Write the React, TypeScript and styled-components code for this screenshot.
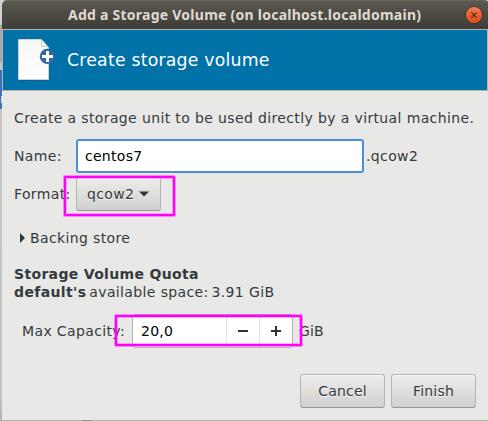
import React from "react";
import styled, { createGlobalStyle } from "styled-components";

const GlobalStyle = createGlobalStyle`
  * { box-sizing: border-box; }
  html, body { margin: 0; padding: 0; overflow: hidden; }
  body { font-family: "DejaVu Sans", sans-serif; font-size: 14px; color: #343a3c; }
  button, input { font: inherit; letter-spacing: 0.28px; color: inherit; }
`;

const Desktop = styled.div`
  width: 488px;
  height: 421px;
  padding: 0 0 1px 2px;
  background:
    linear-gradient(#c9d8ec, #c9d8ec) 1px 96px / 1px 7px no-repeat,
    linear-gradient(#3f73b8, #3f73b8) 0 70px / 2px 39px no-repeat,
    linear-gradient(#8f8f8d, #8f8f8d) 82px 420px / 9px 1px no-repeat,
    linear-gradient(#d4d4d2, #cfcfcd 24px, #a9a9a7 25px, #a9a9a7 62px, #c6c6c4 63px, #c2c2c0 400px, #b0b0ae);
`;

const Dialog = styled.section`
  display: flex;
  flex-direction: column;
  height: 420px;
  background: #e8e8e7;
  border-radius: 5px 3px 0 0;
  overflow: hidden;
`;

const TitleBar = styled.header`
  display: grid;
  grid-template-columns: 1fr 16px;
  align-items: center;
  flex: none;
  height: 29px;
  padding: 0 6px 1px 66px;
  background: linear-gradient(#5b5850, #3e3c38);
  border-top: 1px solid #69665e;
`;

const Title = styled.h1`
  margin: 0;
  font: bold 14px/20px "Noto Sans", sans-serif;
  letter-spacing: 0.25px;
  color: #dfdbd2;
  white-space: nowrap;
`;

const CloseButton = styled.button`
  display: grid;
  place-items: center;
  width: 16px;
  height: 16px;
  padding: 0;
  border: 0;
  border-radius: 50%;
  background: linear-gradient(#f37c5c, #e95420 70%);
  box-shadow: 0 0 0 1px #383631;
`;

const Banner = styled.div`
  display: flex;
  align-items: center;
  gap: 9px;
  flex: none;
  height: 62px;
  padding: 0 13px;
  background: #0072a8;
  border: 1px solid #b3b3b0;
`;

const BannerTitle = styled.h2`
  margin: 0;
  font-size: 17.3px;
  font-weight: normal;
  line-height: 22px;
  letter-spacing: 0.22px;
  color: #fff;
  white-space: nowrap;
`;

const Content = styled.main`
  display: flex;
  flex-direction: column;
  flex: 1;
  padding: 18px 12px 0;
`;

const Text = styled.span<{ $spacing?: number }>`
  line-height: 18px;
  white-space: nowrap;
  letter-spacing: ${({ $spacing = 0.37 }) => $spacing}px;
`;

const TightSpan = styled.span`
  margin-left: -2px;
`;

const Form = styled.div`
  display: grid;
  grid-template-columns: 62px 1fr;
  grid-auto-rows: 34px;
  row-gap: 4px;
  align-items: center;
  margin-top: 12px;
`;

const Field = styled.div`
  display: flex;
  align-items: center;
  gap: 2px;
`;

const Entry = styled.input`
  width: 288px;
  height: 34px;
  padding: 0 7px;
  border: 2px solid #4a90d9;
  border-radius: 3px;
  outline: 0;
  background: #fff;
  color: #000;
`;

const Button = styled.button<{ $menu?: boolean }>`
  display: flex;
  align-items: center;
  justify-content: ${({ $menu }) => ($menu ? "flex-start" : "center")};
  gap: 5px;
  width: 85px;
  height: 34px;
  padding: ${({ $menu }) => ($menu ? "0 0 0 10px" : "0")};
  border: 1px solid #b4b4b2;
  border-bottom-color: #979795;
  border-radius: 3px;
  background: linear-gradient(#ececeb, #e0e0df 45%, #d0d0ce);
  box-shadow: inset 0 1px #f8f8f7;
  text-shadow: 0 1px rgba(255, 255, 255, 0.75);
`;

const Expander = styled.div`
  display: flex;
  align-items: center;
  gap: 5px;
  margin-top: 18px;
  padding-left: 6px;
`;

const Quota = styled.div`
  display: flex;
  flex-direction: column;
  margin-top: 18px;
`;

const Capacity = styled.div`
  display: flex;
  align-items: center;
  height: 34px;
  margin-top: 13px;
  padding-left: 8px;
`;

const CapacityLabel = styled.div`
  display: flex;
  width: 110px;
`;

const Spinner = styled.div`
  display: grid;
  grid-template-columns: 93px 33px 33px;
  flex: none;
  width: 161px;
  height: 34px;
  margin-right: 6px;
  border: 1px solid #b4b4b2;
  border-radius: 3px;
  background: #fff;
`;

const SpinValue = styled.input`
  min-width: 0;
  padding: 0 0 0 8px;
  border: 0;
  outline: 0;
  background: transparent;
  color: #000;
`;

const SpinButton = styled.button`
  display: grid;
  place-items: center;
  padding: 0;
  border: 0;
  border-left: 1px solid #e1e1e0;
  background: transparent;
`;

const Actions = styled.footer`
  display: flex;
  justify-content: flex-end;
  gap: 6px;
  margin-top: 26px;
`;

const Highlight = styled.div<{ $x: number; $y: number; $w: number; $h: number }>`
  position: absolute;
  left: ${({ $x }) => $x}px;
  top: ${({ $y }) => $y}px;
  width: ${({ $w }) => $w}px;
  height: ${({ $h }) => $h}px;
  border: 2px solid #ff00ff;
  border-radius: 1px;
  box-shadow: 0 0 0 1px rgba(255, 0, 255, 0.4), inset 0 0 0 1px rgba(255, 0, 255, 0.3);
  pointer-events: none;
`;

function DocumentIcon() {
  return (
    <svg width="42" height="46" viewBox="0 0 42 46">
      <defs>
        <linearGradient id="paper" x2="0" y2="1">
          <stop stopColor="#f6f6f5" />
          <stop offset="1" stopColor="#fff" />
        </linearGradient>
      </defs>
      <path d="M2.5 43.5h30" stroke="#155878" strokeOpacity=".6" />
      <path d="M2.5 2.5h23l7 8v32h-30z" fill="url(#paper)" stroke="#d0d0ce" />
      <path d="M25.5 3v6.5H31" fill="#fff" stroke="#c9c9c7" />
      <circle cx="31.4" cy="19.4" r="7.6" fill="#3465a4" />
      <path d="M31.5 14v11M26 19.5h11" stroke="#fff" strokeWidth="3" />
    </svg>
  );
}

export default function App() {
  return (
    <>
      <GlobalStyle />
      <Desktop>
        <Dialog>
          <TitleBar>
            <Title>Add a Storage Volume (on localhost.localdomain)</Title>
            <CloseButton aria-label="Close">
              <svg width="8" height="8" viewBox="0 0 8 8">
                <path d="m1.3 1.3 5.4 5.4m0-5.4L1.3 6.7" stroke="#4c2a1d" strokeWidth="1.2" />
              </svg>
            </CloseButton>
          </TitleBar>
          <Banner>
            <DocumentIcon />
            <BannerTitle>Create storage volume</BannerTitle>
          </Banner>
          <Content>
            <Text>Create a storage unit to be used directly by a virtual machine.</Text>
            <Form>
              <Text>Name:</Text>
              <Field>
                <Entry defaultValue="centos7" />
                <Text>.qcow2</Text>
              </Field>
              <Text>Format:</Text>
              <Field>
                <Button $menu>
                  <Text>qcow2</Text>
                  <svg width="10" height="6" viewBox="0 0 10 6">
                    <path d="M0 .5h10L5 5.5z" fill="#2e3436" />
                  </svg>
                </Button>
              </Field>
            </Form>
            <Expander>
              <svg width="5" height="10" viewBox="0 0 5 10">
                <path d="M0 0v10l5-5z" fill="#2e3436" />
              </svg>
              <Text>Backing store</Text>
            </Expander>
            <Quota>
              <Text as="strong" $spacing={0.33}>Storage Volume Quota</Text>
              <Text>
                <strong>default's</strong> <TightSpan>available space:</TightSpan>{" "}
                <TightSpan>3.91 GiB</TightSpan>
              </Text>
            </Quota>
            <Capacity>
              <CapacityLabel>
                <Text>Max Capacity:</Text>
              </CapacityLabel>
              <Spinner>
                <SpinValue defaultValue="20,0" />
                <SpinButton aria-label="Decrease">
                  <svg width="10" height="10" viewBox="0 0 10 10">
                    <path d="M0 5h10" stroke="#2e3436" strokeWidth="2" />
                  </svg>
                </SpinButton>
                <SpinButton aria-label="Increase">
                  <svg width="10" height="10" viewBox="0 0 10 10">
                    <path d="M0 5h10M5 0v10" stroke="#2e3436" strokeWidth="2" />
                  </svg>
                </SpinButton>
              </Spinner>
              <Text $spacing={0.1}>GiB</Text>
            </Capacity>
            <Actions>
              <Button>
                <Text $spacing={0.2}>Cancel</Text>
              </Button>
              <Button>
                <Text $spacing={0.2}>Finish</Text>
              </Button>
            </Actions>
          </Content>
        </Dialog>
        <Highlight $x={64} $y={176} $w={111} $h={40} />
        <Highlight $x={115} $y={315} $w={187} $h={31} />
      </Desktop>
    </>
  );
}
